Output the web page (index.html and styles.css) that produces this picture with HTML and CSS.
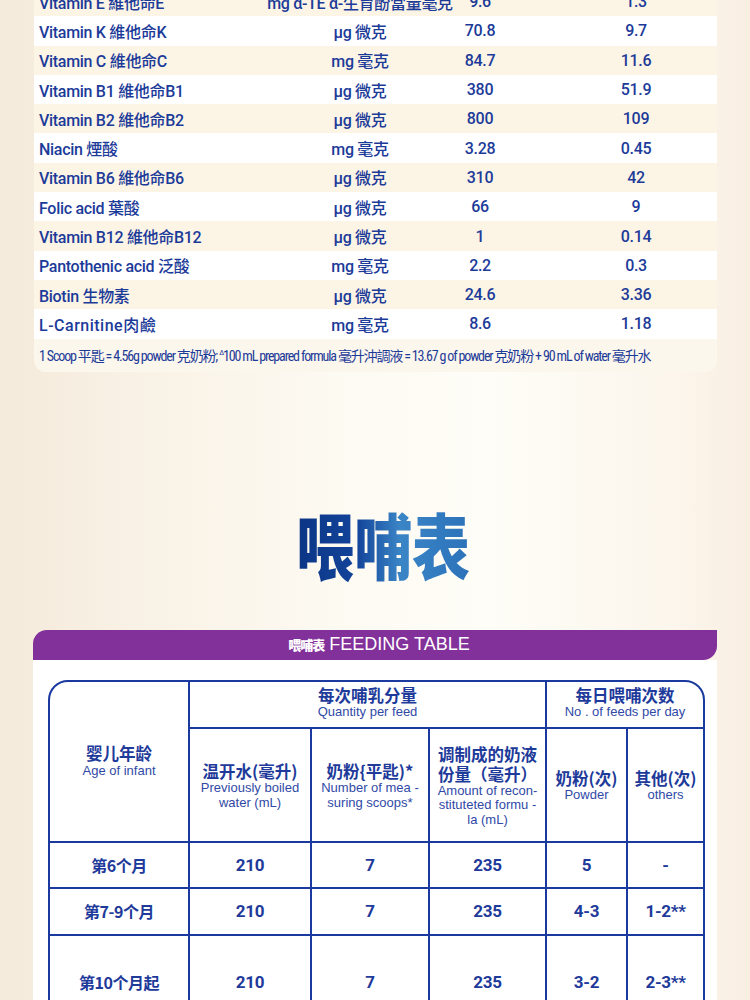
FILE: index.html
```html
<!DOCTYPE html>
<html lang="zh">
<head>
<meta charset="utf-8">
<title>喂哺表</title>
<link rel="stylesheet" href="styles.css">
</head>
<body>
<div class="page">
  <section class="nutri">
    <div class="nrow cream"><span class="nm">Vitamin E 維他命E</span><span class="un">mg α-TE α-生育酚當量毫克</span><span class="v1">9.6</span><span class="v2">1.3</span></div>
    <div class="nrow"><span class="nm">Vitamin K 維他命K</span><span class="un">μg 微克</span><span class="v1">70.8</span><span class="v2">9.7</span></div>
    <div class="nrow cream"><span class="nm">Vitamin C 維他命C</span><span class="un">mg 毫克</span><span class="v1">84.7</span><span class="v2">11.6</span></div>
    <div class="nrow"><span class="nm">Vitamin B1 維他命B1</span><span class="un">μg 微克</span><span class="v1">380</span><span class="v2">51.9</span></div>
    <div class="nrow cream"><span class="nm">Vitamin B2 維他命B2</span><span class="un">μg 微克</span><span class="v1">800</span><span class="v2">109</span></div>
    <div class="nrow"><span class="nm">Niacin 煙酸</span><span class="un">mg 毫克</span><span class="v1">3.28</span><span class="v2">0.45</span></div>
    <div class="nrow cream"><span class="nm">Vitamin B6 維他命B6</span><span class="un">μg 微克</span><span class="v1">310</span><span class="v2">42</span></div>
    <div class="nrow"><span class="nm">Folic acid 葉酸</span><span class="un">μg 微克</span><span class="v1">66</span><span class="v2">9</span></div>
    <div class="nrow cream"><span class="nm">Vitamin B12 維他命B12</span><span class="un">μg 微克</span><span class="v1">1</span><span class="v2">0.14</span></div>
    <div class="nrow"><span class="nm">Pantothenic acid 泛酸</span><span class="un">mg 毫克</span><span class="v1">2.2</span><span class="v2">0.3</span></div>
    <div class="nrow cream"><span class="nm">Biotin 生物素</span><span class="un">μg 微克</span><span class="v1">24.6</span><span class="v2">3.36</span></div>
    <div class="nrow"><span class="nm wide">L-Carnitine肉鹼</span><span class="un">mg 毫克</span><span class="v1">8.6</span><span class="v2">1.18</span></div>
    <div class="note"><span class="note-text">1 Scoop 平匙 = 4.56g powder 克奶粉; <sup>Δ</sup>100 mL prepared formula 毫升沖調液 = 13.67 g of powder 克奶粉 + 90 mL of water 毫升水</span></div>
  </section>

  <h1 class="title"><span class="title-text">喂哺表</span></h1>

  <section class="feed">
    <div class="banner"><span class="bcn">喂哺表</span><span class="ben">FEEDING TABLE</span></div>
    <div class="panel">
      <div class="ftable">
        <div class="c age"><b>婴儿年龄</b><i>Age of infant</i></div>
        <div class="c qty"><b>每次哺乳分量</b><i>Quantity per feed</i></div>
        <div class="c daily"><b>每日喂哺次数</b><i>No . of feeds per day</i></div>
        <div class="c sub"><b>温开水(毫升)</b><i>Previously boiled<br>water (mL)</i></div>
        <div class="c sub"><b>奶粉{平匙)*</b><i>Number of mea -<br>suring scoops*</i></div>
        <div class="c sub amt"><b>调制成的奶液<br>份量（毫升）</b><i>Amount of recon-<br>stituteted formu -<br>la (mL)</i></div>
        <div class="c sub"><b>奶粉(次)</b><i>Powder</i></div>
        <div class="c sub"><b>其他(次)</b><i>others</i></div>

        <div class="c d cn">第6个月</div><div class="c d">210</div><div class="c d">7</div><div class="c d">235</div><div class="c d">5</div><div class="c d">-</div>
        <div class="c d cn">第7-9个月</div><div class="c d">210</div><div class="c d">7</div><div class="c d">235</div><div class="c d">4-3</div><div class="c d">1-2**</div>
        <div class="c d cn">第10个月起</div><div class="c d">210</div><div class="c d">7</div><div class="c d">235</div><div class="c d">3-2</div><div class="c d">2-3**</div>
      </div>
    </div>
  </section>
</div>
</body>
</html>
```

FILE: styles.css
```css
html, body {
  margin: 0;
  padding: 0;
}
body {
  width: 750px;
  height: 1000px;
  overflow: hidden;
  background: linear-gradient(90deg, #f4eadb 0%, #f9f2e6 20%, #fdfaf2 45%, #fefdf7 65%, #fcf6ec 90%, #f9eee2 100%);
  font-family: Roboto, "Noto Sans CJK TC", sans-serif;
  color: #1f3d9b;
}
.page {
  display: flex;
  flex-direction: column;
}

/* nutrition card */
.nutri {
  margin: -13px 33px 0 34px;
  border-radius: 0 0 12px 12px;
  overflow: hidden;
  background: #fcf7ec;
}
.nrow {
  height: 29.3px;
  display: grid;
  grid-template-columns: 225px 192px 48px 80px 104px;
  padding-left: 5px;
  align-items: center;
  background: #ffffff;
  font-size: 16px;
  font-weight: 500;
  white-space: nowrap;
  letter-spacing: -0.3px;
  color: #1c3b99;
}
.nrow.cream {
  background: #fcf5e6;
}
.nm {
  font-family: Roboto, "Noto Sans CJK TC", sans-serif;
}
.nm.wide {
  letter-spacing: 0.5px;
}
.un {
  text-align: center;
}
.v1 {
  text-align: center;
}
.v2 {
  grid-column: 5;
  text-align: center;
}
.note {
  height: 33px;
  display: flex;
  align-items: center;
  padding-left: 5px;
  white-space: nowrap;
}
.note-text {
  font-family: "Liberation Sans Narrow", "Roboto Condensed", "Noto Sans CJK TC", sans-serif;
  font-size: 14px;
  letter-spacing: -1.15px;
  color: #1c3b99;
}
.note-text sup {
  font-size: 8px;
}

/* title */
.title {
  margin: 134px 0 0;
  height: 70px;
  display: flex;
  justify-content: center;
  padding-left: 16px;
}
.title-text {
  display: inline-block;
  font-family: "Noto Sans CJK SC", sans-serif;
  font-weight: 900;
  font-size: 58px;
  line-height: 60px;
  transform: scaleY(1.24);
  transform-origin: top center;
  background: linear-gradient(90deg, #0b3585 0%, #13449a 35%, #3a85c6 60%, #2c72ba 100%);
  -webkit-background-clip: text;
  background-clip: text;
  color: transparent;
}

/* feeding section */
.feed {
  margin: 54px 33px 0 33px;
}
.banner {
  height: 30px;
  background: #82309a;
  border-radius: 14px 0 14px 0;
  display: flex;
  justify-content: center;
  align-items: center;
  color: #ffffff;
  gap: 5px;
  padding-left: 8px;
}
.bcn {
  font-family: "Noto Sans CJK SC", sans-serif;
  font-weight: 900;
  font-size: 13px;
  letter-spacing: -1px;
}
.ben {
  font-family: "Liberation Sans", Arial, sans-serif;
  font-weight: 400;
  font-size: 18px;
  letter-spacing: 0px;
}
.panel {
  background: #ffffff;
  padding: 20px 13px 0 15px;
  height: 400px;
}
.ftable {
  display: grid;
  width: fit-content;
  grid-template-columns: 138px 120px 116px 115px 79px 75px;
  grid-template-rows: 45px 112px 44px 45px 92px;
  gap: 2px;
  background: #1b3aa0;
  border: 2px solid #1b3aa0;
  border-radius: 20px 20px 0 0;
  overflow: hidden;
}
.c {
  background: #ffffff;
  display: flex;
  flex-direction: column;
  justify-content: center;
  align-items: center;
  text-align: center;
}
.c b {
  font-family: "Noto Sans CJK SC", sans-serif;
  font-weight: 700;
  font-size: 16.5px;
  line-height: 19px;
  color: #1e3a9a;
}
.c i {
  font-style: normal;
  font-family: "Liberation Sans", Arial, sans-serif;
  font-size: 13px;
  line-height: 14.5px;
  color: #3049a6;
}
.age {
  grid-row: 1 / 3;
  grid-column: 1;
}
.age i {
  margin-top: 1px;
}
.qty {
  grid-column: 2 / 5;
  padding-bottom: 2px;
}
.daily {
  grid-column: 5 / 7;
  padding-bottom: 2px;
}
.sub {
  padding-top: 3px;
}
.amt {
  padding-top: 2px;
}
.amt b {
  line-height: 20px;
}
.d {
  font-family: Roboto, sans-serif;
  font-weight: 700;
  font-size: 17px;
  color: #1e3a9a;
  letter-spacing: -0.3px;
}
.d.cn {
  font-family: "Noto Sans CJK SC", sans-serif;
  font-size: 16px;
  letter-spacing: -0.5px;
}
```
